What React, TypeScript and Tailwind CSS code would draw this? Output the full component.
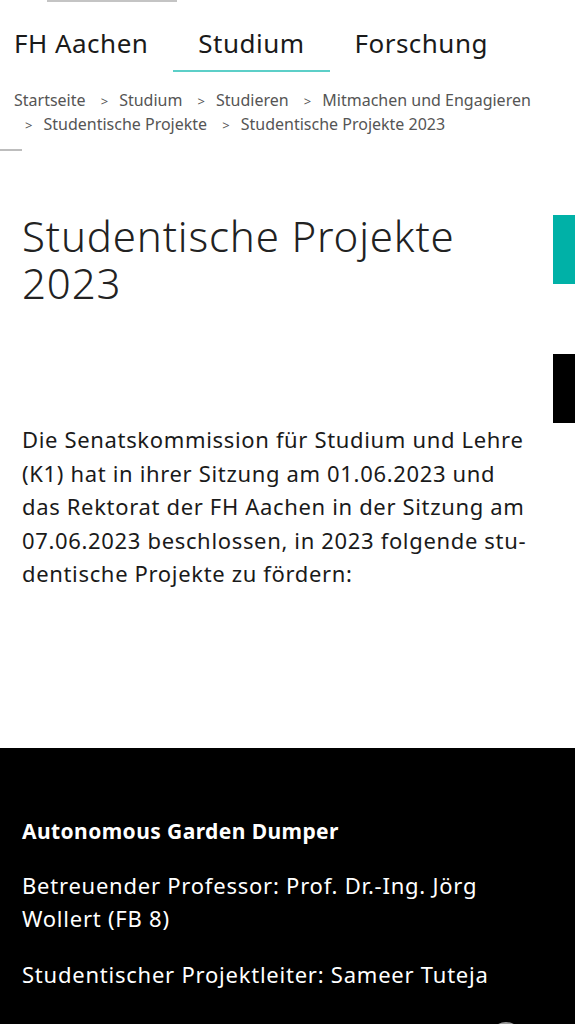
import React from 'react';

const crumbs = ['Startseite', 'Studium', 'Studieren', 'Mitmachen und Engagieren', 'Studentische Projekte', 'Studentische Projekte 2023'];

const navItems = [
  { label: 'FH Aachen', active: false },
  { label: 'Studium', active: true },
  { label: 'Forschung', active: false }
];

export default function App() {
  return (
    <div
      className="flex h-[1024px] w-full flex-col overflow-hidden bg-white text-[#1a1a1a]"
      style={{ fontFamily: '"Noto Sans", "Open Sans", sans-serif' }}
    >
      {/* scrolled top edge */}
      <div className="ml-[47px] h-[2px] w-[130px] shrink-0 bg-[#c4c4c4]" />

      {/* Main nav */}
      <nav className="-ml-[11px] mt-[24px] flex whitespace-nowrap tracking-[0.03em]">
        {navItems.map(item => (
          <div
            key={item.label}
            className={`border-b-2 px-[25px] pb-[10px] text-[26px] leading-[34px] ${
              item.active ? 'border-[#5ccfc8]' : 'border-transparent'
            }`}
          >
            {item.label}
          </div>
        ))}
      </nav>

      {/* Breadcrumb */}
      <div className="mt-[17px] pl-[14px] pr-[30px] text-[16px] leading-[23px] text-[#555]">
        {crumbs.map((c, i) => (
          <React.Fragment key={c}>
            {i > 0 && <span className="px-[11px] text-[13px]">&gt;</span>}
            <span className="whitespace-nowrap">{c}</span>{' '}
          </React.Fragment>
        ))}
      </div>
      <div className="mt-[12px] h-[2px] w-[22px] shrink-0 bg-[#bdbdbd]" />

      <div className="relative flex">
        <div className="min-w-0 flex-1 pl-[22px] pr-[36px]">
          {/* Title */}
          <h1 className="mt-[61px] text-[42px] font-light leading-[47px] tracking-[0.02em] text-[#222]">
            Studentische Projekte 2023
          </h1>

          <p className="mt-[117px] text-[22px] leading-[33.5px] tracking-[0.03em] text-[#1a1a1a]">
            Die Senatskommission für Studium und Lehre (K1) hat in ihrer Sitzung am 01.06.2023 und das Rektorat der FH
            Aachen in der Sitzung am 07.06.2023 beschlossen, in 2023 folgende stu&shy;dentische Projekte zu fördern:
          </p>
        </div>

        {/* Side tabs, fixed to the right edge */}
        <div className="absolute right-0 top-[64px] flex w-[22px] flex-col gap-[70px]">
          <div className="h-[69px] bg-[#00b1a7]" />
          <div className="h-[69px] bg-black" />
        </div>
      </div>

      {/* Project block */}
      <section className="relative mt-[157px] flex-1 bg-black px-[22px] pt-[69px] text-white">
        <h2 className="text-[21px] font-bold leading-[28px] tracking-[0.02em]">Autonomous Garden Dumper</h2>
        <p className="mt-[24px] pr-[40px] text-[22px] leading-[33px] tracking-[0.035em]">
          Betreuender Professor: Prof. Dr.-Ing. Jörg Wollert (FB 8)
        </p>
        <p className="mt-[23px] text-[22px] leading-[33px] tracking-[0.035em]">
          Studentischer Projektleiter: Sameer Tuteja
        </p>
        <div className="absolute bottom-[-34px] left-[490px] h-[36px] w-[32px] rounded-full border-2 border-[#9a9a9a]" />
      </section>
    </div>
  );
}
